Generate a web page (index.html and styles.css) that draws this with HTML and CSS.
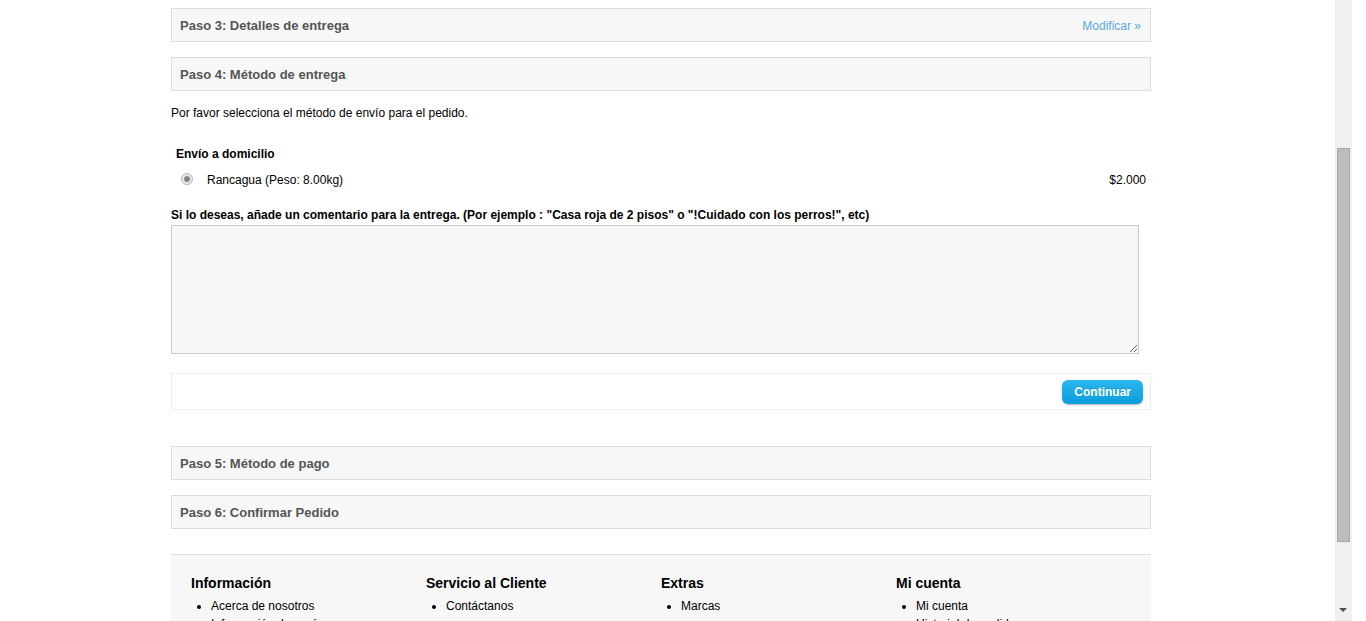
FILE: index.html
```html
<!DOCTYPE html>
<html lang="es">
<head>
    <meta charset="UTF-8">
    <title>Caja - Método de entrega</title>
    <link rel="stylesheet" href="styles.css">
</head>
<body>
    <div class="viewport">
        <div class="container">
            <div class="checkout-heading">Paso 3: Detalles de entrega <a href="#" class="modify">Modificar &raquo;</a></div>
            <div class="checkout-heading">Paso 4: Método de entrega</div>

            <div class="checkout-content">
                <p class="intro">Por favor selecciona el método de envío para el pedido.</p>
                <table class="radio">
                    <tr>
                        <td colspan="3" class="method-title">Envío a domicilio</td>
                    </tr>
                    <tr class="highlight">
                        <td class="radio-cell"><input type="radio" name="shipping_method" checked></td>
                        <td class="method-name">Rancagua (Peso: 8.00kg)</td>
                        <td class="price">$2.000</td>
                    </tr>
                </table>
                <p class="comment-label">Si lo deseas, añade un comentario para la entrega. (Por ejemplo : "Casa roja de 2 pisos" o "!Cuidado con los perros!", etc)</p>
                <textarea class="comment" rows="8"></textarea>
                <div class="buttons">
                    <button type="button" class="button">Continuar</button>
                </div>
            </div>

            <div class="checkout-heading">Paso 5: Método de pago</div>
            <div class="checkout-heading">Paso 6: Confirmar Pedido</div>

            <div id="footer">
                <div class="column">
                    <h3>Información</h3>
                    <ul>
                        <li><a href="#">Acerca de nosotros</a></li>
                        <li><a href="#">Información de envío</a></li>
                    </ul>
                </div>
                <div class="column">
                    <h3>Servicio al Cliente</h3>
                    <ul>
                        <li><a href="#">Contáctanos</a></li>
                    </ul>
                </div>
                <div class="column">
                    <h3>Extras</h3>
                    <ul>
                        <li><a href="#">Marcas</a></li>
                    </ul>
                </div>
                <div class="column">
                    <h3>Mi cuenta</h3>
                    <ul>
                        <li><a href="#">Mi cuenta</a></li>
                        <li><a href="#">Historial de pedidos</a></li>
                    </ul>
                </div>
            </div>
        </div>
    </div>

    <div class="scrollbar">
        <div class="thumb"></div>
        <div class="arrow-down"></div>
    </div>
</body>
</html>
```

FILE: styles.css
```css
html, body {
    height: 100%;
    overflow: hidden;
}
body {
    margin: 0;
    background-color: #ffffff;
    color: #000;
    font-family: 'Liberation Sans', Arial, Helvetica, sans-serif;
    font-size: 12px;
}
a {
    color: #000;
    text-decoration: none;
}
.viewport {
    width: 1335px;
    padding-top: 8px;
}
.container {
    width: 980px;
    margin-left: 171px;
}
.checkout-heading {
    display: flex;
    justify-content: space-between;
    align-items: center;
    height: 16px;
    padding: 9px 9px 7px 8px;
    margin-bottom: 15px;
    background-color: #f7f7f7;
    border: 1px solid #dbdee1;
    color: #555;
    font-size: 13px;
    font-weight: bold;
    line-height: 16px;
}
.checkout-heading .modify {
    color: #5ba7e3;
    font-weight: normal;
    font-size: 12px;
}
.checkout-content {
    padding-bottom: 36px;
}
.intro {
    margin: 15px 0 0;
    line-height: 15px;
}
table.radio {
    width: 100%;
    margin-top: 23px;
    border-collapse: collapse;
}
table.radio td {
    padding: 1px 5px;
    line-height: 18px;
}
.method-title {
    font-weight: bold;
    padding-bottom: 7px !important;
}
.radio-cell {
    width: 12px;
    padding-left: 10px !important;
    padding-right: 9px !important;
}
.radio-cell input {
    -webkit-appearance: none;
    appearance: none;
    display: block;
    width: 12px;
    height: 12px;
    margin: 0 0 2px;
    border: 1px solid #b4b4b4;
    border-radius: 50%;
    background: radial-gradient(circle, #7d7d7d 0, #8a8a8a 2.5px, #e6e6e6 3.5px, #f4f4f4 100%);
    box-sizing: border-box;
}
.price {
    text-align: right;
}
.comment-label {
    margin: 18px 0 3px;
    font-weight: bold;
    line-height: 14px;
}
.comment {
    display: block;
    width: 968px;
    height: 129px;
    margin: 0;
    padding: 3px;
    background-color: #f7f7f7;
    border: 1px solid #cbcbcb;
    box-sizing: border-box;
    font-family: 'Liberation Sans', Arial, sans-serif;
    font-size: 12px;
}
.buttons {
    display: flex;
    justify-content: flex-end;
    margin-top: 19px;
    padding: 6px 7px 5px;
    border: 1px solid #eeeeee;
}
.button {
    height: 24px;
    padding: 0 12px;
    border: none;
    border-radius: 6px;
    background: linear-gradient(to bottom, #2bb6ee 0%, #0a9ddc 100%);
    box-shadow: 0 1px 2px rgba(0, 0, 0, 0.3);
    color: #fff;
    font-family: 'Liberation Sans', Arial, sans-serif;
    font-size: 12px;
    font-weight: bold;
    text-shadow: 0 -1px 0 rgba(0, 0, 0, 0.15);
    cursor: pointer;
}
#footer {
    display: grid;
    grid-template-columns: repeat(4, 235px);
    margin-top: 25px;
    padding: 20px 20px 30px;
    background-color: #f7f7f7;
    border-top: 1px solid #dddddd;
}
#footer h3 {
    margin: 0 0 6px;
    font-size: 14px;
    line-height: 16px;
    color: #000;
}
#footer ul {
    margin: 0;
    padding-left: 20px;
    list-style: disc;
}
#footer li {
    line-height: 18px;
}
.scrollbar {
    position: fixed;
    top: 0;
    left: 1335px;
    width: 17px;
    height: 621px;
    background-color: #f0f0f0;
}
.scrollbar .thumb {
    position: absolute;
    top: 148px;
    left: 2px;
    width: 11px;
    height: 392px;
    background-color: #bcbcbc;
    border: 1px solid #a8a8a8;
}
.scrollbar .arrow-down {
    position: absolute;
    top: 608px;
    left: 4px;
    width: 0;
    height: 0;
    border-left: 4px solid transparent;
    border-right: 4px solid transparent;
    border-top: 4px solid #505050;
}
```
